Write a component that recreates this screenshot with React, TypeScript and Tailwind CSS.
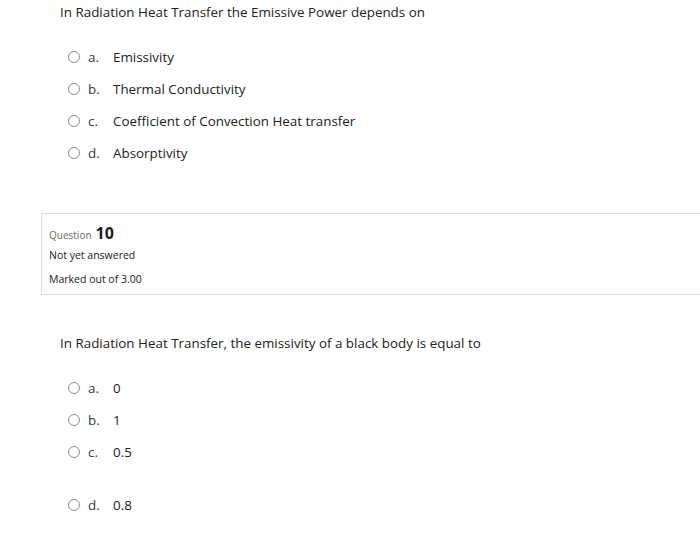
import React from 'react';

interface Choice {
  letter: string;
  text: string;
  extraTop?: boolean;
}

const firstChoices: Choice[] = [
  { letter: 'a.', text: 'Emissivity' },
  { letter: 'b.', text: 'Thermal Conductivity' },
  { letter: 'c.', text: 'Coefficient of Convection Heat transfer' },
  { letter: 'd.', text: 'Absorptivity' },
];

const secondChoices: Choice[] = [
  { letter: 'a.', text: '0' },
  { letter: 'b.', text: '1' },
  { letter: 'c.', text: '0.5' },
  { letter: 'd.', text: '0.8', extraTop: true },
];

const ChoiceRow: React.FC<{ choice: Choice }> = ({ choice }) => (
  <label className={`h-8 flex items-center ${choice.extraTop ? 'mt-[21px]' : ''}`}>
    <span className="w-[12px] h-[12px] rounded-full border border-[#8d8d8d] bg-white shrink-0" />
    <span className="w-[25px] ml-[8px] text-[#3a3a3a]">{choice.letter}</span>
    <span>{choice.text}</span>
  </label>
);

const QuestionText: React.FC<{ text: string; choices: Choice[] }> = ({ text, choices }) => (
  <div className="pl-[60px]">
    <div className="h-6 leading-6">{text}</div>
    <div className="mt-[17px] pl-[8px]">
      {choices.map((c) => (
        <ChoiceRow key={c.letter} choice={c} />
      ))}
    </div>
  </div>
);

export default function App() {
  return (
    <div
      className="w-[700px] h-[539px] overflow-hidden bg-white text-[#222222] text-[13.4px]"
      style={{ fontFamily: '"Open Sans", "Noto Sans", sans-serif' }}
    >
      <QuestionText text="In Radiation Heat Transfer the Emissive Power depends on" choices={firstChoices} />

      {/* Question info box */}
      <div className="mt-[44px] ml-[41px] w-[680px] h-[82px] border border-[#dcdcdc] bg-[#fdfdfd] px-[7px] pt-[7px]">
        <div className="h-[22px] flex items-baseline gap-[4px]">
          <span className="text-[10px] text-[#6b6b6b]">Question</span>
          <span className="text-[16px] font-bold text-[#1a1a1a]">10</span>
        </div>
        <div className="h-6 leading-6 text-[10.5px]">Not yet answered</div>
        <div className="h-6 leading-6 text-[10.5px]">Marked out of 3.00</div>
      </div>

      <div className="mt-[36px]">
        <QuestionText
          text="In Radiation Heat Transfer, the emissivity of a black body is equal to"
          choices={secondChoices}
        />
      </div>
    </div>
  );
}
